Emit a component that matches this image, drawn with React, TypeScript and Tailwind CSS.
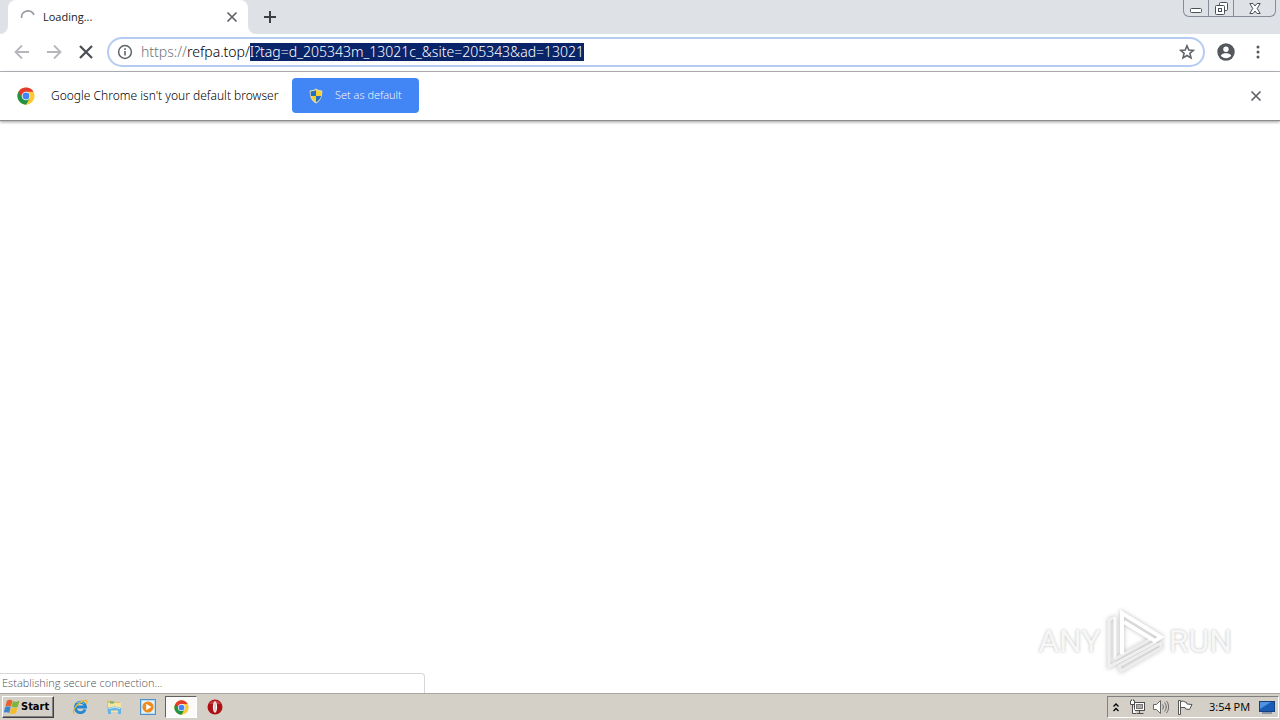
import clsx from "clsx";
import React, { useEffect, useRef } from "react";

const HOST = "refpa.top/";
const PATH = "I?tag=d_205343m_13021c_&site=205343&ad=13021";

const ChromeLogo = ({ className }: { className?: string }) => (
  <svg viewBox="0 0 48 48" className={className} aria-hidden="true">
    <circle cx="24" cy="24" r="23" fill="#fcc934" />
    <path d="M4.1 12.5A23 23 0 0 0 24 47L34 29.7 24 24Z" fill="#229342" />
    <path d="M4.1 12.5A23 23 0 0 1 43.9 12.5H24L14 29.7Z" fill="#e33b2e" />
    <circle cx="24" cy="24" r="11.5" fill="#fff" />
    <circle cx="24" cy="24" r="9.2" fill="#4285f4" />
  </svg>
);

const Cross = ({ className }: { className?: string }) => (
  <svg viewBox="0 0 12 12" className={className} aria-hidden="true">
    <path d="M1.5 1.5 10.5 10.5M10.5 1.5 1.5 10.5" stroke="currentColor" strokeWidth="1.7" />
  </svg>
);

const Arrow = ({ className }: { className?: string }) => (
  <svg viewBox="0 0 16 16" className={className} fill="none" aria-hidden="true">
    <path d="M15 8H2M8 1.5 1.5 8 8 14.5" stroke="currentColor" strokeWidth="1.8" />
  </svg>
);

const WindowControls = () => (
  <div className="flex h-[17px] mr-1 rounded-b-md border border-t-0 border-[#868c98] text-[#4b5058]">
    <button aria-label="Minimize" className="flex w-[25px] justify-center pt-2 border-r border-[#868c98]">
      <svg viewBox="0 0 12 5" className="w-3 h-[5px]">
        <rect x=".5" y=".5" width="11" height="4" rx="1" fill="#fff" stroke="currentColor" />
      </svg>
    </button>
    <button aria-label="Restore" className="flex w-[25px] justify-center pt-0.5 border-r border-[#868c98]">
      <svg viewBox="0 0 13 13" className="size-[13px]" fill="#fff" stroke="currentColor">
        <rect x="4.5" y=".5" width="8" height="8" rx="1" />
        <rect x=".5" y="3.5" width="9" height="9" rx="1" />
        <rect x="3.5" y="6.5" width="3" height="3" />
      </svg>
    </button>
    <button aria-label="Close" className="flex w-[41px] justify-center pt-[3px]">
      <svg viewBox="0 0 12 11" className="w-3 h-[11px]" fill="#fff" stroke="currentColor">
        <path d="M.8.5H4L6 3 8 .5H11.2L8.2 5.5 11.2 10.5H8L6 8 4 10.5H.8L3.8 5.5Z" />
      </svg>
    </button>
  </div>
);

const TabStrip = () => (
  <header className="flex h-[34px] bg-[#dee1e6] text-[#3c4043]">
    <div className="w-2 bg-white">
      <div className="h-full rounded-br-lg bg-[#dee1e6]" />
    </div>
    <div className="flex w-60 items-center rounded-t-lg bg-white pl-3 pr-2">
      <svg viewBox="0 0 16 16" className="size-4 mr-[7px]" fill="none" aria-hidden="true">
        <path d="M1.5 9A6.5 6.5 0 0 1 14 6" stroke="#9a9da1" strokeWidth="1.8" />
      </svg>
      <span className="flex-1 text-[11px] text-[#202124]">Loading...</span>
      <button aria-label="Close tab" className="p-0.5">
        <Cross className="size-3 text-[#5f6368]" />
      </button>
    </div>
    <div className="w-2 bg-white">
      <div className="h-full rounded-bl-lg bg-[#dee1e6]" />
    </div>
    <button aria-label="New tab" className="ml-2 self-center">
      <svg viewBox="0 0 12 12" className="size-3" aria-hidden="true">
        <path d="M6 0V12M0 6H12" stroke="#3c4043" strokeWidth="2" />
      </svg>
    </button>
    <div className="ml-auto">
      <WindowControls />
    </div>
  </header>
);

const Toolbar = () => {
  const input = useRef<HTMLInputElement>(null);

  useEffect(() => {
    input.current?.focus();
    input.current?.setSelectionRange(HOST.length, HOST.length + PATH.length);
  }, []);

  return (
    <nav className="flex h-[38px] items-center border-b border-[#b5b8bd] pb-px pl-3.5 pr-3.5">
      <button aria-label="Back" className="mr-4 text-[#b5b7ba]">
        <Arrow className="size-4" />
      </button>
      <button aria-label="Forward" className="mr-4 text-[#b5b7ba]">
        <Arrow className="size-4 rotate-180" />
      </button>
      <button aria-label="Stop" className="mr-[13px] text-[#4b4f54]">
        <Cross className="size-4" />
      </button>
      <div className="flex h-[30px] flex-1 items-center rounded-full border-2 border-[#b5cbef] px-2 font-['Noto_Sans',sans-serif] text-sm font-light leading-[18px]">
        <svg viewBox="0 0 16 16" className="size-4 shrink-0 mr-2" fill="none" aria-hidden="true">
          <circle cx="8" cy="8" r="6.4" stroke="#5f6368" strokeWidth="1.5" />
          <path d="M8 7V11.6M8 4.3V5.9" stroke="#5f6368" strokeWidth="1.6" />
        </svg>
        <label htmlFor="url" className="text-[#70757a]">
          https://
        </label>
        <input
          id="url"
          ref={input}
          defaultValue={HOST + PATH}
          spellCheck={false}
          className="h-[18px] min-w-0 flex-1 text-black outline-none selection:bg-[#0a246a] selection:text-white"
        />
        <button aria-label="Bookmark this page">
          <svg viewBox="0 0 16 16" className="size-4" fill="none">
            <path
              d="M8 1.8 9.8 6.1 14.4 6.4 10.9 9.4 12 13.9 8 11.5 4 13.9 5.1 9.4 1.6 6.4 6.2 6.1Z"
              stroke="#5f6368"
              strokeWidth="1.6"
            />
          </svg>
        </button>
      </div>
      <button aria-label="Profile" className="ml-3">
        <svg viewBox="0 0 18 18" className="size-[18px]">
          <circle cx="9" cy="9" r="8.7" fill="#54575c" />
          <circle cx="9" cy="6.2" r="2.7" fill="#fff" />
          <path d="M3.8 12.6C4.6 10.7 7.2 10.2 9 10.2S13.4 10.7 14.2 12.6A6.3 6.3 0 0 1 3.8 12.6Z" fill="#fff" />
        </svg>
      </button>
      <button aria-label="Menu" className="ml-[15px]">
        <svg viewBox="0 0 16 16" className="size-4" fill="#54575c">
          <circle cx="8" cy="3" r="1.5" />
          <circle cx="8" cy="8" r="1.5" />
          <circle cx="8" cy="13" r="1.5" />
        </svg>
      </button>
    </nav>
  );
};

const DefaultBrowserBar = () => (
  <section className="flex h-[49px] items-center border-b border-[#8c8c8c] pb-px pl-[17px] pr-[18px] shadow-[0_1px_3px_rgba(0,0,0,0.4)]">
    <ChromeLogo className="size-[18px] mr-4" />
    <p className="w-[241px] whitespace-nowrap font-['Noto_Sans',sans-serif] text-xs font-light text-black">
      Google Chrome isn't your default browser
    </p>
    <button className="flex h-[35px] w-[127px] items-center rounded bg-[#4285f4] pl-4 text-[11px] font-light text-white">
      <svg viewBox="0 0 16 16" className="size-4 mr-[11px]" aria-hidden="true">
        <path d="M8 .5C10 2 12 2.4 14.3 2.4 14.5 8.5 12.5 13 8 15.5 3.5 13 1.5 8.5 1.7 2.4 4 2.4 6 2 8 .5Z" fill="#e2dcae" />
        <path d="M8 2V8H2.9C2.6 6.5 2.6 5 2.7 3.5 4.8 3.4 6.5 3 8 2Z" fill="#256fc0" />
        <path d="M8 2V8H13.1C13.4 6.5 13.4 5 13.3 3.5 11.2 3.4 9.5 3 8 2Z" fill="#f6cf35" />
        <path d="M8 8V14.3C5.3 12.7 3.5 10.7 2.9 8Z" fill="#f6cf35" />
        <path d="M8 8V14.3C10.7 12.7 12.5 10.7 13.1 8Z" fill="#256fc0" />
      </svg>
      Set as default
    </button>
    <button aria-label="Dismiss" className="ml-auto text-[#5f6368]">
      <Cross className="size-3" />
    </button>
  </section>
);

const Watermark = () => (
  <div className="absolute bottom-5 right-12 flex items-center gap-1 font-['Roboto',sans-serif] text-[32px] text-[#f7f7f7] [text-shadow:0_0_3px_#bbb]">
    <span>ANY</span>
    <svg viewBox="0 0 60 64" className="w-[60px] h-16 drop-shadow-[0_0_2px_#bbb]" fill="none" aria-hidden="true">
      <path d="M10 8 4 11V58L51 33" stroke="#f0f0f0" strokeWidth="3" />
      <path d="M10 8V50" stroke="#fafafa" strokeWidth="3" />
      <path d="M10 50 46 30M16 62 56 39V34L14 57Z" stroke="#ededed" strokeWidth="3" />
      <path d="M17 45V4L56 28 50 32 19 13" stroke="#fff" strokeWidth="4" />
    </svg>
    <span>RUN</span>
  </div>
);

const InternetExplorerIcon = () => (
  <svg viewBox="0 0 16 16" className="size-4" fill="none">
    <path d="M13.2 10.5A5.2 5.2 0 1 1 13.6 8H4" stroke="#2386d2" strokeWidth="2.8" />
    <path d="M5 3.8A5 5 0 0 1 12 5" stroke="#73c8f4" strokeWidth="1" />
    <path d="M2.4 14.5C-.5 13.5 3 7 8 3.6 12 .8 16.3.2 14.4 4.4" stroke="#e7b72e" strokeWidth="1.3" />
  </svg>
);

const ExplorerIcon = () => (
  <svg viewBox="0 0 16 16" className="size-4">
    <path d="M1 1.5H6L7 3H14V13H1Z" fill="#dfc267" />
    <path d="M2 4H15V13H2Z" fill="#f6e59c" />
    <path d="M4 2.5H8V4.5H4Z" fill="#6db37b" />
    <path d="M2 9Q8.500 6 15 9V15H12V11.500H5V15H2Z" fill="#68b3e2" />
    <path d="M3 9.500Q8.500 7 14 9.500" fill="none" stroke="#c5e7f7" />
  </svg>
);

const MediaPlayerIcon = () => (
  <svg viewBox="0 0 16 16" className="size-4">
    <rect x=".5" y=".5" width="15" height="15" fill="#b9daf3" stroke="#4d91c8" />
    <rect x="2" y="2" width="12" height="12" fill="#e3f2fc" />
    <circle cx="8" cy="8" r="5.6" fill="#f08a18" />
    <path d="M6.2 4.7 11.4 8 6.2 11.3Z" fill="#fff" />
  </svg>
);

const OperaIcon = () => (
  <svg viewBox="0 0 16 16" className="size-4">
    <circle cx="8" cy="8" r="7.5" fill="#ad1015" />
    <path d="M2 5A7 7 0 0 1 14 5Z" fill="#c5383b" />
    <ellipse cx="8" cy="8" rx="2.1" ry="5.8" fill="#fff" />
    <ellipse cx="8" cy="8" rx="1" ry="5" fill="#d8cccc" />
  </svg>
);

const apps = [
  { name: "Internet Explorer", icon: <InternetExplorerIcon /> },
  { name: "Windows Explorer", icon: <ExplorerIcon /> },
  { name: "Windows Media Player", icon: <MediaPlayerIcon /> },
  { name: "Google Chrome", icon: <ChromeLogo className="size-[15px]" />, active: true },
  { name: "Opera", icon: <OperaIcon /> },
];

const SystemTray = () => (
  <div className="ml-auto mr-px flex h-[22px] items-center border border-[#808080] border-b-white border-r-white pl-[5px] pr-[3px]">
    <button aria-label="Show hidden icons">
      <svg viewBox="0 0 6 9" className="w-1.5 h-[9px]" fill="none" stroke="#000" strokeWidth="1.3">
        <path d="M.5 3.5 3 1 5.5 3.5M.5 8 3 5.5 5.5 8" />
      </svg>
    </button>
    <svg viewBox="0 0 16 16" className="size-4 ml-2.5" fill="none" stroke="#4e4e4e" aria-label="Network">
      <rect x="5.5" y="3.5" width="10" height="8" fill="#fff" />
      <rect x="7.5" y="5.5" width="6" height="4" fill="#aaa" stroke="#777" />
      <path d="M7.5 14.5H14.5M10.5 11.5V14.5" />
      <path d="M1.5 1.5V5.5H5.5V1.5M3.5 5.5V14.5H7" fill="#fff" />
      <path d="M2.5.5V2M4.5.5V2" />
    </svg>
    <svg viewBox="0 0 16 16" className="size-4 ml-2" fill="none" stroke="#666" aria-label="Volume">
      <path d="M.5 5.5H3.5L7.5 1.5V14.5L3.5 10.5H.5Z" fill="#fff" />
      <path d="M9.5 5.5C10.7 7 10.7 9 9.5 10.5M11.5 3.5C13.8 6 13.8 10 11.5 12.5M13.5 2C16.3 5.5 16.3 10.5 13.5 14" />
    </svg>
    <svg viewBox="0 0 16 16" className="size-4 ml-2" fill="#fff" stroke="#555" aria-label="Action Center">
      <path d="M3.5 2.5C6 1.5 7.5 3 9.5 3.5L10 5 15 5.5 12.5 10.5 8.5 10 8 8.5H3.5Z" />
      <path d="M1.5 1.5H3.5V15.5H1.5Z" />
    </svg>
    <time className="ml-4 w-[50px] whitespace-nowrap text-[11px] text-black">3:54 PM</time>
    <button aria-label="Show desktop">
      <svg viewBox="0 0 16 14" className="w-4 h-3.5">
        <rect x=".5" y="1.5" width="15" height="10" fill="#1b5bb8" stroke="#16407c" />
        <path d="M1 2H12L1 9Z" fill="#4f93df" />
        <path d="M3 13H13" stroke="#6d819b" strokeWidth="1.5" />
      </svg>
    </button>
  </div>
);

const Taskbar = () => (
  <footer className="flex h-[27px] items-center border-t border-[#aaa79f] bg-[#d4d0c8] pl-0.5">
    <button className="mr-[9px] flex h-[22px] w-[52px] items-center gap-px border border-white border-b-[#404040] border-r-[#404040] pl-px font-['DejaVu_Sans_Condensed','DejaVu_Sans',sans-serif] text-[11px] font-bold text-black shadow-[inset_-1px_-1px_0_#808080]">
      <svg viewBox="0 0 16 16" className="size-4 shrink-0" aria-hidden="true">
        <path d="M3 1.500C5 .3 7 .8 8.500 1.700L6.900 7.500C5 6.500 3.400 6.400 1.400 7.200Z" fill="#e9602c" />
        <path d="M9 2.100C11 3.200 13 3 15.500 1.800L13.800 7.700C11.800 8.900 9.500 8.900 7.400 7.800Z" fill="#7fb53a" />
        <path d="M1.200 7.900C3 7 5 7.200 6.700 8.100L5.200 14C3.400 13 1.800 13 -.3 13.700Z" fill="#3c86cf" />
        <path d="M7.200 8.400C9.200 9.500 11.300 9.400 13.600 8.200L12 14C9.800 15.200 7.700 15.200 5.700 14.200Z" fill="#f3bd2c" />
      </svg>
      Start
    </button>
    <div className="flex gap-px">
      {apps.map((app) => (
        <button
          key={app.name}
          aria-label={app.name}
          className={clsx(
            "flex h-[22px] items-center justify-center",
            app.active
              ? "w-8 border border-[#606060] border-b-white border-r-white bg-[#fafaf9]"
              : "w-[33px]"
          )}
        >
          {app.icon}
        </button>
      ))}
    </div>
    <SystemTray />
  </footer>
);

export default function App() {
  return (
    <div className="flex min-h-screen flex-col bg-white font-['Open_Sans','Noto_Sans',sans-serif]">
      <TabStrip />
      <Toolbar />
      <DefaultBrowserBar />
      <main className="relative flex-1">
        <Watermark />
        <div
          role="status"
          className="absolute bottom-0 left-0 h-5 w-[425px] rounded-tr border-r border-t border-[#d5d7da] pl-0.5 text-[11px] font-light leading-[18px] text-[#4b4f54]"
        >
          Establishing secure connection...
        </div>
      </main>
      <Taskbar />
    </div>
  );
}
